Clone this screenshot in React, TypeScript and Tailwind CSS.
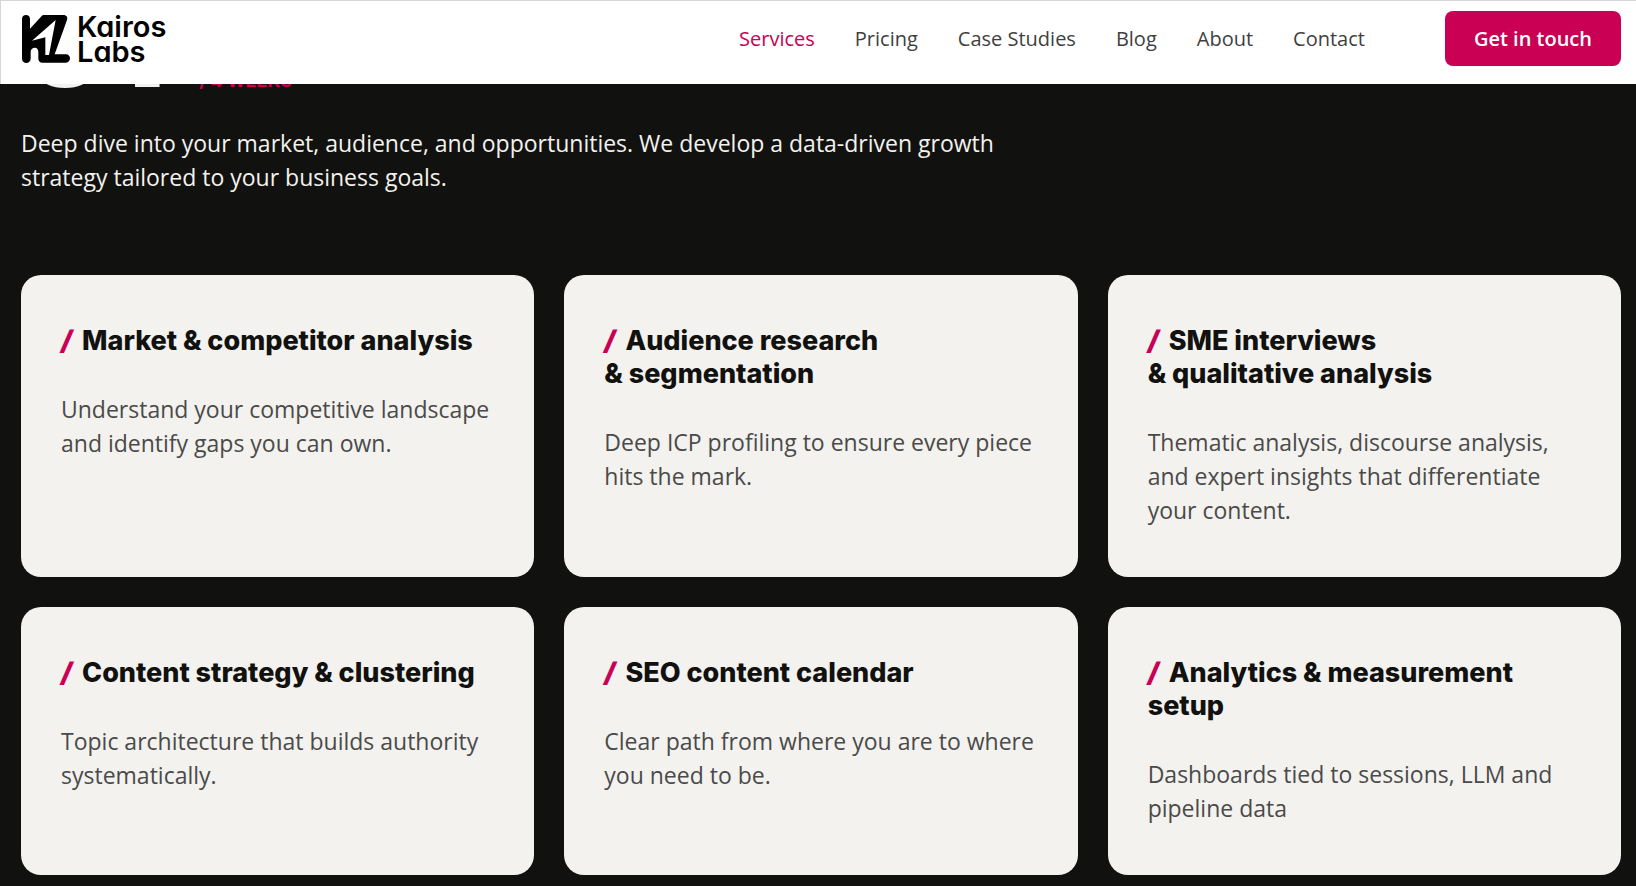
import React from 'react';

const links = ['Services', 'Pricing', 'Case Studies', 'Blog', 'About', 'Contact'];

const cards = [
  { title: 'Market & competitor analysis', body: 'Understand your competitive landscape and identify gaps you can own.' },
  { title: 'Audience research &\u00a0segmentation', body: 'Deep ICP profiling to ensure every piece hits the mark.' },
  { title: 'SME interviews &\u00a0qualitative\u00a0analysis', body: 'Thematic analysis, discourse analysis, and expert insights that differentiate your content.' },
  { title: 'Content strategy & clustering', body: 'Topic architecture that builds authority systematically.' },
  { title: 'SEO content calendar', body: 'Clear path from where you are to where you need to be.' },
  { title: 'Analytics & measurement setup', body: 'Dashboards tied to sessions, LLM and pipeline data' },
];

function Logo() {
  return (
    <a href="#home" aria-label="Kairos Labs" className="flex items-center gap-[7px] text-black">
      <svg width="48" height="48" viewBox="0 0 144 144" aria-hidden="true">
        <path
          fill="currentColor"
          d="M0 12C0 4 5 0 12 0s12 4 12 12v29L57 5c3-4 7-5 11-5h56c10 0 14 7 11 15L98 118h34c7 0 12 5 12 12s-5 13-12 13H62c-8 0-13-5-13-12v-20c0-7-4-13-10-13-8 0-13 5-13 12v21c0 7-6 13-13 13S0 138 0 131zM101 15L30 77l40-10v53h11z"
        />
      </svg>
      <span className="font-['Inter'] text-[29px] leading-[25px] font-semibold [font-feature-settings:'cv11']">
        Kairos
        <br />
        Labs
      </span>
    </a>
  );
}

export default function App() {
  return (
    <div className="min-h-screen bg-[#11110f] font-['Open_Sans',sans-serif]">
      <header className="sticky top-0 z-10 flex h-[84px] items-center border-t border-l border-[#d6d6d6] bg-white pr-[15px] pb-2 pl-[21px]">
        <Logo />
        <nav className="ml-auto flex items-center gap-10 text-xl text-[#3f3f3f]">
          {links.map((l) => (
            <a key={l} href="#" className={l === 'Services' ? 'text-[#c90053]' : ''}>
              {l}
            </a>
          ))}
        </nav>
        <button className="ml-20 h-[55px] rounded-lg bg-[#c90053] px-[29px] text-xl font-semibold text-white">Get in touch</button>
      </header>
      <main className="-mt-[104px] pr-[15px] pb-[10px] pl-[21px]">
        <div className="flex h-[124px] items-baseline gap-[34px] font-['Inter']">
          <h2 className="text-[124px] leading-none font-black text-[#f3f2ee]">01</h2>
          <span className="text-lg leading-7 font-bold text-[#c90053]">/ 4 WEEKS</span>
        </div>
        <p className="mt-[22px] max-w-[980px] text-[23px] leading-[34px] text-[#f3f2ee]">
          Deep dive into your market, audience, and opportunities. We develop a data-driven growth strategy tailored to your business goals.
        </p>
        <ul className="mt-[81px] grid grid-cols-3 gap-[30px]">
          {cards.map((c) => (
            <li key={c.title} className="rounded-[20px] bg-[#f3f2ee] px-10 pt-[49px] pb-[50px]">
              <h3 className="font-['Inter'] text-[27px] leading-[33px] font-extrabold text-[#11110f]">
                <span className="mr-1 font-black text-[#c90053] italic">/</span> {c.title}
              </h3>
              <p className="mt-[35px] text-[23px] leading-[34px] text-[#4a4a4a]">{c.body}</p>
            </li>
          ))}
        </ul>
      </main>
    </div>
  );
}
